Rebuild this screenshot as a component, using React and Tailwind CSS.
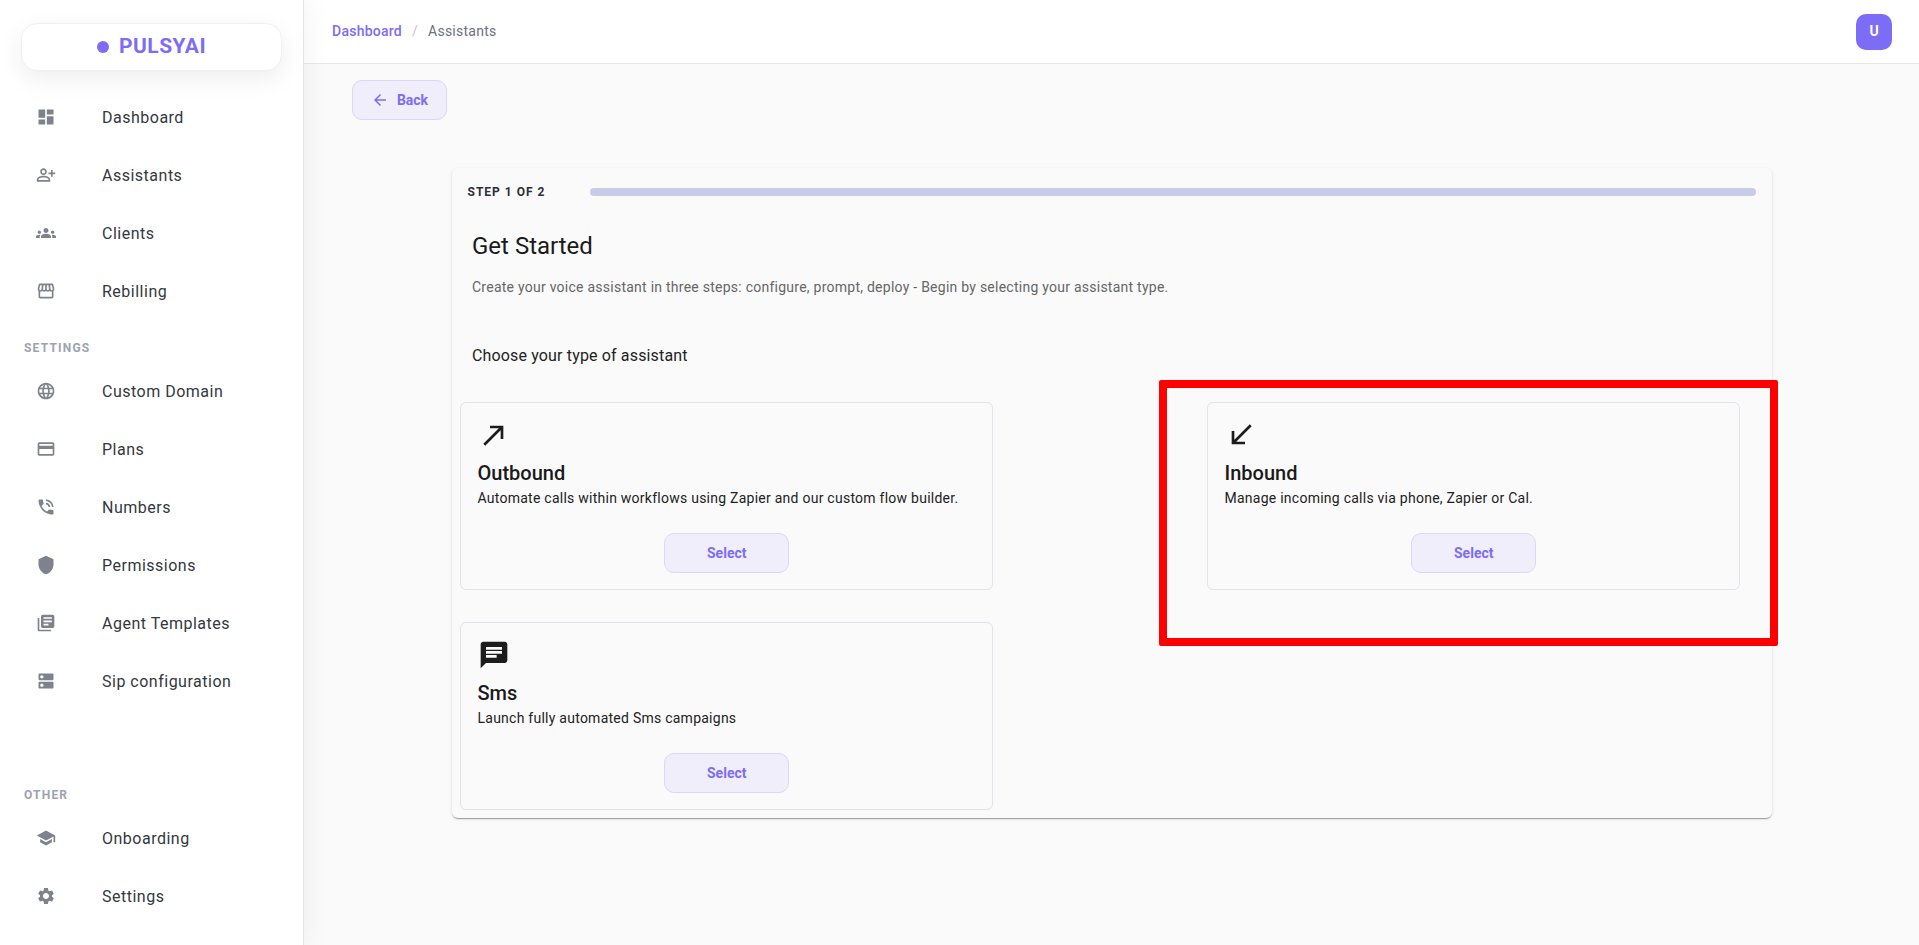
import {
  MdDashboard,
  MdOutlinePersonAddAlt,
  MdGroups,
  MdOutlineStorefront,
  MdLanguage,
  MdCreditCard,
  MdPhoneInTalk,
  MdShield,
  MdLibraryBooks,
  MdDns,
  MdSchool,
  MdSettings,
  MdArrowBack,
  MdNorthEast,
  MdSouthWest,
  MdChat
} from "react-icons/md";

const mainLinks = [
  { label: "Dashboard", icon: MdDashboard },
  { label: "Assistants", icon: MdOutlinePersonAddAlt },
  { label: "Clients", icon: MdGroups },
  { label: "Rebilling", icon: MdOutlineStorefront }
];

const settingsLinks = [
  { label: "Custom Domain", icon: MdLanguage },
  { label: "Plans", icon: MdCreditCard },
  { label: "Numbers", icon: MdPhoneInTalk },
  { label: "Permissions", icon: MdShield },
  { label: "Agent Templates", icon: MdLibraryBooks },
  { label: "Sip configuration", icon: MdDns }
];

const otherLinks = [
  { label: "Onboarding", icon: MdSchool },
  { label: "Settings", icon: MdSettings }
];

function NavItem({ label, icon: Icon }) {
  return (
    <a className="flex h-[58px] items-center pl-[36px] text-[16px] tracking-[0.5px] text-[#333840]">
      <Icon size={20} className="shrink-0 text-[#7d828c]" />
      <span className="ml-[46px] pt-[2px]">{label}</span>
    </a>
  );
}

function SectionLabel({ children }) {
  return (
    <div className="flex h-[42px] items-start pl-[24px] pt-[21px] text-[12px] leading-[14px] font-bold tracking-[1.2px] text-[#9ca3af]">
      {children}
    </div>
  );
}

function TypeCard({ icon: Icon, title, text, marked }) {
  return (
    <div className="relative h-[188px] w-[533px] rounded-md border border-[#e2e2ea] p-4 pl-[16.5px]">
      <Icon size={32} className="text-[#1c1c1c]" />
      <h3 className="mt-[10px] text-[20px] leading-6 font-medium text-[#1a1a1a]">{title}</h3>
      <p className="mt-[3px] text-[14px] leading-5 tracking-[0.25px] text-[#222222]">{text}</p>
      <button className="mx-auto mt-[25px] block h-10 w-[125px] rounded-[10px] border border-[#dcd6fb] bg-[#f1eefc] text-[14px] font-bold text-[#7c6cf6]">
        Select
      </button>
      {marked && (
        <div className="pointer-events-none absolute -top-[23px] -right-[39px] -bottom-[57px] -left-[49px] rounded-[2px] border-[8px] border-[#ff0000]" />
      )}
    </div>
  );
}

export default function App() {
  return (
    <div className="flex h-screen overflow-hidden bg-[#fafafa] font-['Roboto',sans-serif]">
      {/* SIDEBAR */}
      <aside className="relative z-10 flex w-[304px] shrink-0 flex-col border-r border-[#e5e5e5] bg-white pt-[23px] pb-[20px] shadow-[0_0_30px_rgba(0,0,0,0.06)]">
        <div className="mx-[21px] flex h-[48px] items-center justify-center gap-[10px] rounded-2xl border border-[#f0f0f0] bg-white shadow-[0_8px_24px_rgba(0,0,0,0.07)]">
          <span className="h-3 w-3 rounded-full bg-[#7c6cf6]" />
          <span className="text-[21px] font-bold tracking-[0.5px] text-[#7c6cf6]">PULSYAI</span>
        </div>

        <nav className="mt-[17px]">
          {mainLinks.map(l => (
            <NavItem key={l.label} {...l} />
          ))}
          <SectionLabel>SETTINGS</SectionLabel>
          {settingsLinks.map(l => (
            <NavItem key={l.label} {...l} />
          ))}
        </nav>

        <div className="mt-auto">
          <SectionLabel>OTHER</SectionLabel>
          {otherLinks.map(l => (
            <NavItem key={l.label} {...l} />
          ))}
        </div>
      </aside>

      <div className="flex min-w-0 flex-1 flex-col">
        {/* HEADER */}
        <header className="flex h-[64px] shrink-0 items-center justify-between border-b border-[#e8e8e8] bg-white pr-[27px] pl-[28px]">
          <div className="flex items-center text-[14px] tracking-[0.25px]">
            <span className="font-medium text-[#7c6cf6]">Dashboard</span>
            <span className="mx-[10px] text-[#c4c4c8]">/</span>
            <span className="text-[#6b7280]">Assistants</span>
          </div>
          <div className="flex h-9 w-9 items-center justify-center rounded-[10px] bg-[#7c6cf6] text-[14px] font-bold text-white">
            U
          </div>
        </header>

        {/* CONTENT */}
        <main className="flex-1 px-[48px] pt-4">
          <button className="flex h-10 w-[95px] items-center justify-center gap-[8px] rounded-[10px] border border-[#dcd6fb] bg-[#f1eefc] text-[14px] font-bold text-[#7c6cf6]">
            <MdArrowBack size={18} />
            Back
          </button>

          <section className="mx-auto mt-[48px] w-[1320px] rounded-md bg-[#fafafa] pb-[8px] shadow-[0_2px_1px_-1px_rgba(0,0,0,0.2),0_1px_1px_0_rgba(0,0,0,0.14),0_1px_3px_0_rgba(0,0,0,0.12)]">
            <div className="flex h-[48px] items-center pr-[16px] pl-[16px]">
              <span className="w-[122px] shrink-0 text-[12px] font-bold tracking-[1px] text-[#2d2d3a]">
                STEP 1 OF 2
              </span>
              <div className="h-2 flex-1 rounded-full bg-[#c8cce8]" />
            </div>

            <div className="pl-[20.5px]">
              <h1 className="mt-[14px] text-[24px] leading-8 text-[#1a1a1a]">Get Started</h1>
              <p className="mt-[15px] text-[14px] leading-5 tracking-[0.25px] text-[#666666]">
                Create your voice assistant in three steps: configure, prompt, deploy - Begin by selecting your assistant type.
              </p>
              <h2 className="mt-[47px] text-[16px] leading-6 tracking-[0.15px] text-[#222222]">Choose your type of assistant</h2>
            </div>

            <div className="mt-[34px] grid grid-cols-[533px_533px] gap-x-[214px] gap-y-[32px] pl-[8.5px]">
              <TypeCard
                icon={MdNorthEast}
                title="Outbound"
                text="Automate calls within workflows using Zapier and our custom flow builder."
              />
              <TypeCard
                icon={MdSouthWest}
                title="Inbound"
                text="Manage incoming calls via phone, Zapier or Cal."
                marked
              />
              <TypeCard
                icon={MdChat}
                title="Sms"
                text="Launch fully automated Sms campaigns"
              />
            </div>
          </section>
        </main>
      </div>
    </div>
  );
}
